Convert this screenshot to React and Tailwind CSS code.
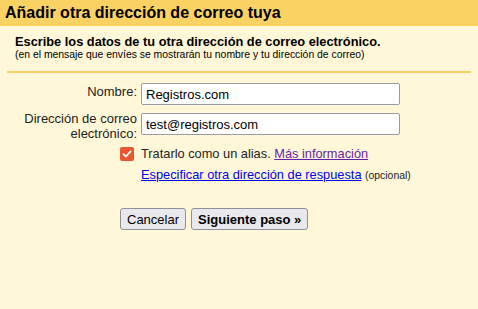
import React, { useState } from 'react';

const App = () => {
  const [alias, setAlias] = useState(true);

  return (
    <div className="w-[478px] h-[309px] bg-[#fff7d7] font-['Liberation_Sans',Arial,sans-serif] text-[#222] overflow-hidden">
      {/* Header */}
      <div className="h-[26px] bg-[#fad163] flex items-center px-[5px]">
        <h1 className="text-[16px] font-bold text-black leading-none">Añadir otra dirección de correo tuya</h1>
      </div>

      {/* Intro */}
      <div className="px-[7px]">
        <div className="pt-[8px] pb-[10px] px-[8px] border-b-2 border-[#fad163]">
          <p className="text-[12.8px] font-bold text-black leading-[15px]">
            Escribe los datos de tu otra dirección de correo electrónico.
          </p>
          <p className="text-[10.4px] leading-[12px] text-black">
            (en el mensaje que envíes se mostrarán tu nombre y tu dirección de correo)
          </p>
        </div>
      </div>

      {/* Form */}
      <div className="mt-[10px] flex flex-col gap-[8px]">
        <div className="flex items-start gap-[4px]">
          <label className="w-[137px] text-right text-[13px] leading-[15px] pt-[1px]">Nombre:</label>
          <input
            defaultValue="Registros.com"
            className="w-[259px] h-[22px] px-[4px] bg-white border border-[#9a9aa4] rounded-[2px] text-[13px] text-black outline-none"
          />
        </div>
        <div className="flex items-start gap-[4px] h-[22px]">
          <label className="w-[137px] text-right text-[13px] leading-[15px] -mt-[2px]">
            Dirección de correo electrónico:
          </label>
          <input
            defaultValue="test@registros.com"
            className="w-[259px] h-[22px] px-[4px] bg-white border border-[#9a9aa4] rounded-[2px] text-[13px] text-black outline-none"
          />
        </div>
      </div>

      <div className="mt-[11px] pl-[120px] flex flex-col gap-[6px]">
        <div className="flex items-center gap-[7px] h-[15px]">
          <button
            type="button"
            onClick={() => setAlias(!alias)}
            className="w-[14px] h-[14px] rounded-[2px] bg-[#e8572d] flex items-center justify-center"
          >
            {alias && (
              <svg width="10" height="10" viewBox="0 0 10 10">
                <path d="M1.5 5.2 L4 7.5 L8.5 2.5" fill="none" stroke="white" strokeWidth="1.8" strokeLinecap="round" strokeLinejoin="round" />
              </svg>
            )}
          </button>
          <span className="text-[12.8px] leading-[15px]">
            Tratarlo como un alias.{' '}
            <a href="#" className="text-[#681da8] underline">Más información</a>
          </span>
        </div>
        <div className="pl-[21px] text-[12.8px] leading-[15px]">
          <a href="#" className="underline text-[#0000ee]">Especificar otra dirección de respuesta</a>{' '}
          <span className="text-[10.4px]">(opcional)</span>
        </div>
      </div>

      <div className="mt-[25px] pl-[120px] flex gap-[5px]">
        <button className="h-[22px] px-[6px] bg-[#e9e9ed] border border-[#8f8f9d] rounded-[3px] text-[13px] text-black leading-none">
          Cancelar
        </button>
        <button className="h-[22px] px-[6px] bg-[#e9e9ed] border border-[#8f8f9d] rounded-[3px] text-[13px] font-bold text-black leading-none">
          Siguiente paso »
        </button>
      </div>
    </div>
  );
};

export default App;
